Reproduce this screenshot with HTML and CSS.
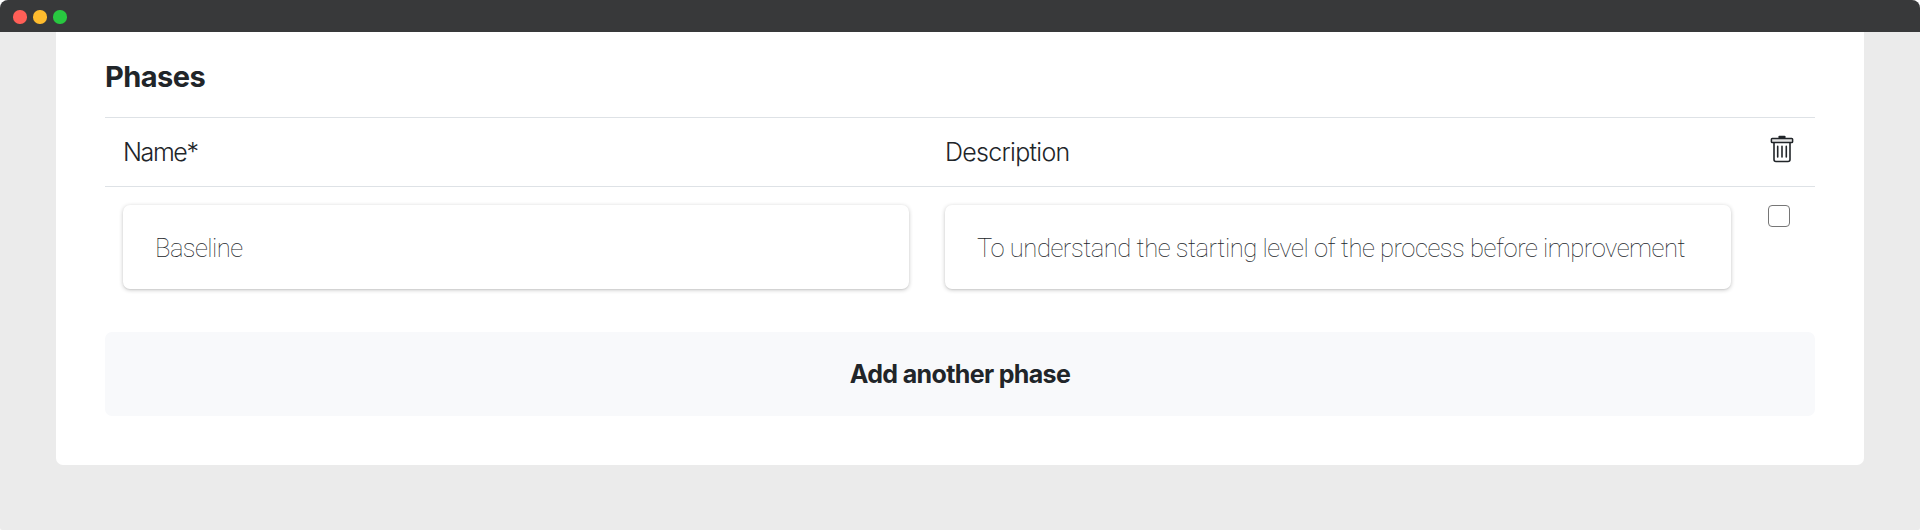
FILE: index.html
```html
<!DOCTYPE html>
<html lang="en">
<head>
<meta charset="utf-8">
<title>Phases</title>
<link rel="stylesheet" href="styles.css">
</head>
<body>
<div class="window">
  <header class="titlebar">
    <span class="dot dot-close"></span>
    <span class="dot dot-minimize"></span>
    <span class="dot dot-zoom"></span>
  </header>
  <main class="card">
    <h2 class="heading"><span class="heading-text">Phases</span></h2>
    <div class="row head-row">
      <div class="cell"><span class="label-name">Name*</span></div>
      <div class="cell"><span class="label-description">Description</span></div>
      <div class="cell icon-cell">
        <svg class="trash" width="24" height="28" viewBox="0 0 24 28" fill="none" stroke="#212529">
          <path d="M9.5 2h5" stroke-width="2.4" stroke-linecap="round"/>
          <rect x="1.4" y="3.5" width="21.2" height="4" rx="0.8" stroke-width="1.5" fill="#e4e4e4"/>
          <path d="M4 7.7V24.5a2 2 0 0 0 2 2H18a2 2 0 0 0 2-2V7.7" stroke-width="1.6"/>
          <path d="M7.7 11.4V22M12 11.4V22M16.3 11.4V22" stroke-width="1.6" stroke-linecap="round"/>
        </svg>
      </div>
    </div>
    <div class="row body-row">
      <div class="cell"><div class="field"><span class="value-name">Baseline</span></div></div>
      <div class="cell"><div class="field"><span class="value-description">To understand the starting level of the process before improvement</span></div></div>
      <div class="cell check-cell"><span class="checkbox"></span></div>
    </div>
    <button class="add" type="button"><span class="add-text">Add another phase</span></button>
  </main>
</div>
</body>
</html>
```
FILE: styles.css
```css
* { box-sizing: border-box; }
body {
  margin: 0;
  background: #fff;
  color: #212529;
  font-family: Inter, "Liberation Sans", sans-serif;
}
.window {
  width: 1920px;
  height: 530px;
  overflow: hidden;
  border-radius: 8px 8px 2px 2px;
  background: #ebebeb;
}
.titlebar {
  display: flex;
  align-items: center;
  gap: 6.8px;
  height: 32px;
  padding: 2px 13.3px 0;
  background: #38393a;
}
.dot { width: 13.3px; height: 13.3px; border-radius: 50%; }
.dot-close { background: #ff5f57; }
.dot-minimize { background: #febc2e; }
.dot-zoom { background: #28c840; }
.card {
  height: 433px;
  margin: 0 56px;
  padding: 0 49px;
  border-radius: 0 0 7px 7px;
  background: #fff;
}
.heading {
  height: 85px;
  margin: 0;
  padding-top: 27px;
  font-size: 29px;
  line-height: 36px;
  font-weight: 650;
}
.heading-text { letter-spacing: -0.55px; }
.row {
  display: grid;
  grid-template-columns: 822px 822px 66px;
  border-top: 1px solid #dee2e6;
}
.head-row { height: 69px; font-size: 25px; font-weight: 300; line-height: 32px; }
.cell { padding: 18px 18px 0 18px; white-space: nowrap; }
.head-row .icon-cell { padding: 17px 0 0 21px; line-height: 0; }
.label-name { letter-spacing: -1.4px; }
.label-description { letter-spacing: -0.7px; }
.body-row { height: 146px; }
.field {
  height: 84px;
  padding: 0 32px;
  border-radius: 7px;
  background: #fff;
  box-shadow: 0 1px 4px rgba(0, 0, 0, 0.23), 0 1px 1px rgba(0, 0, 0, 0.05);
  font: 100 25.6px/86px Roboto, "Liberation Sans", sans-serif;
}
.value-name { letter-spacing: -0.55px; }
.value-description { letter-spacing: -0.48px; }
.body-row .check-cell { padding: 18px 0 0 19px; line-height: 0; }
.checkbox {
  display: inline-block;
  width: 22px;
  height: 22px;
  border: 1px solid #767676;
  border-radius: 4px;
}
.add {
  display: block;
  width: 100%;
  height: 84px;
  padding: 0;
  border: 0;
  border-radius: 7px;
  background: #f8f9fb;
  color: #212529;
  font: 650 25px/32px Inter, "Liberation Sans", sans-serif;
}
.add-text { letter-spacing: -0.65px; }
```
